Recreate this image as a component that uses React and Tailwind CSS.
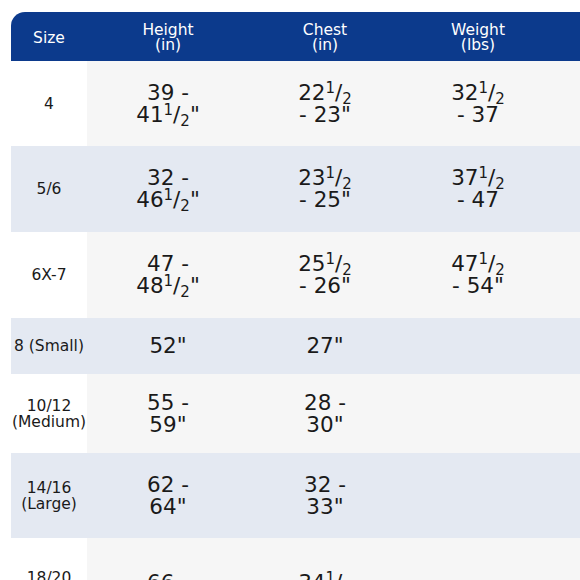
import React from 'react'

// fraction like 41 1/2"
function Half({ whole, tail = '' }) {
    return (
        <span>
            {whole}
            <span className="relative -top-[7px] text-[15px] leading-none">1</span>
            /
            <span className="relative top-[4px] text-[15px] leading-none">2</span>
            {tail}
        </span>
    )
}

const rows = [
    { size: ['4'], h: 85, height: ['39 -', <Half whole="41" tail={'"'} />], chest: [<Half whole="22" />, '- 23"'], weight: [<Half whole="32" />, '- 37'] },
    { size: ['5/6'], h: 86, height: ['32 -', <Half whole="46" tail={'"'} />], chest: [<Half whole="23" />, '- 25"'], weight: [<Half whole="37" />, '- 47'] },
    { size: ['6X-7'], h: 86, height: ['47 -', <Half whole="48" tail={'"'} />], chest: [<Half whole="25" />, '- 26"'], weight: [<Half whole="47" />, '- 54"'] },
    { size: ['8 (Small)'], h: 56, height: ['52"'], chest: ['27"'], weight: [] },
    { size: ['10/12', '(Medium)'], h: 79, height: ['55 -', '59"'], chest: ['28 -', '30"'], weight: [] },
    { size: ['14/16', '(Large)'], h: 85, height: ['62 -', '64"'], chest: ['32 -', '33"'], weight: [] },
    { size: ['18/20', '(X-', 'Large)'], h: 112, height: ['66 -', '68"'], chest: [<Half whole="34" />, '- 36"'], weight: [] },
]

function Lines({ items, className }) {
    return (
        <div className={className}>
            {items.map((t, i) => <div key={i}>{t}</div>)}
        </div>
    )
}

export default function App() {
    return (
        <div className="w-[580px] h-[580px] overflow-hidden bg-white pt-3 pl-[11px] font-['DejaVu_Sans',Verdana,sans-serif]">
            <div className="w-[640px]">
                <div className="grid grid-cols-[76px_162px_152px_154px_1fr] h-[49px] pt-[3px] bg-[#0c3a8c] text-white rounded-tl-[14px] text-[15.5px] leading-[15px] text-center items-center">
                    <div>Size</div>
                    <div>Height<br />(in)</div>
                    <div>Chest<br />(in)</div>
                    <div>Weight<br />(lbs)</div>
                    <div></div>
                </div>
                {rows.map((r, i) => {
                    const alt = i % 2 === 1
                    const rest = alt ? 'bg-[#e4e9f2]' : 'bg-[#f6f6f6]'
                    return (
                        <div key={i} className="grid grid-cols-[76px_162px_152px_154px_1fr] text-center text-[#1a1a1a]" style={{ height: r.h }}>
                            <div className={`flex items-center justify-center text-[15.5px] leading-[16px] ${alt ? 'bg-[#e4e9f2]' : 'bg-white'}`}>
                                <Lines items={r.size} />
                            </div>
                            <div className={`flex items-center justify-center text-[21.5px] leading-[22px] ${rest}`}>
                                <Lines items={r.height} />
                            </div>
                            <div className={`flex items-center justify-center text-[21.5px] leading-[22px] ${rest}`}>
                                <Lines items={r.chest} />
                            </div>
                            <div className={`flex items-center justify-center text-[21.5px] leading-[22px] ${rest}`}>
                                <Lines items={r.weight} />
                            </div>
                            <div className={rest}></div>
                        </div>
                    )
                })}
            </div>
        </div>
    )
}
